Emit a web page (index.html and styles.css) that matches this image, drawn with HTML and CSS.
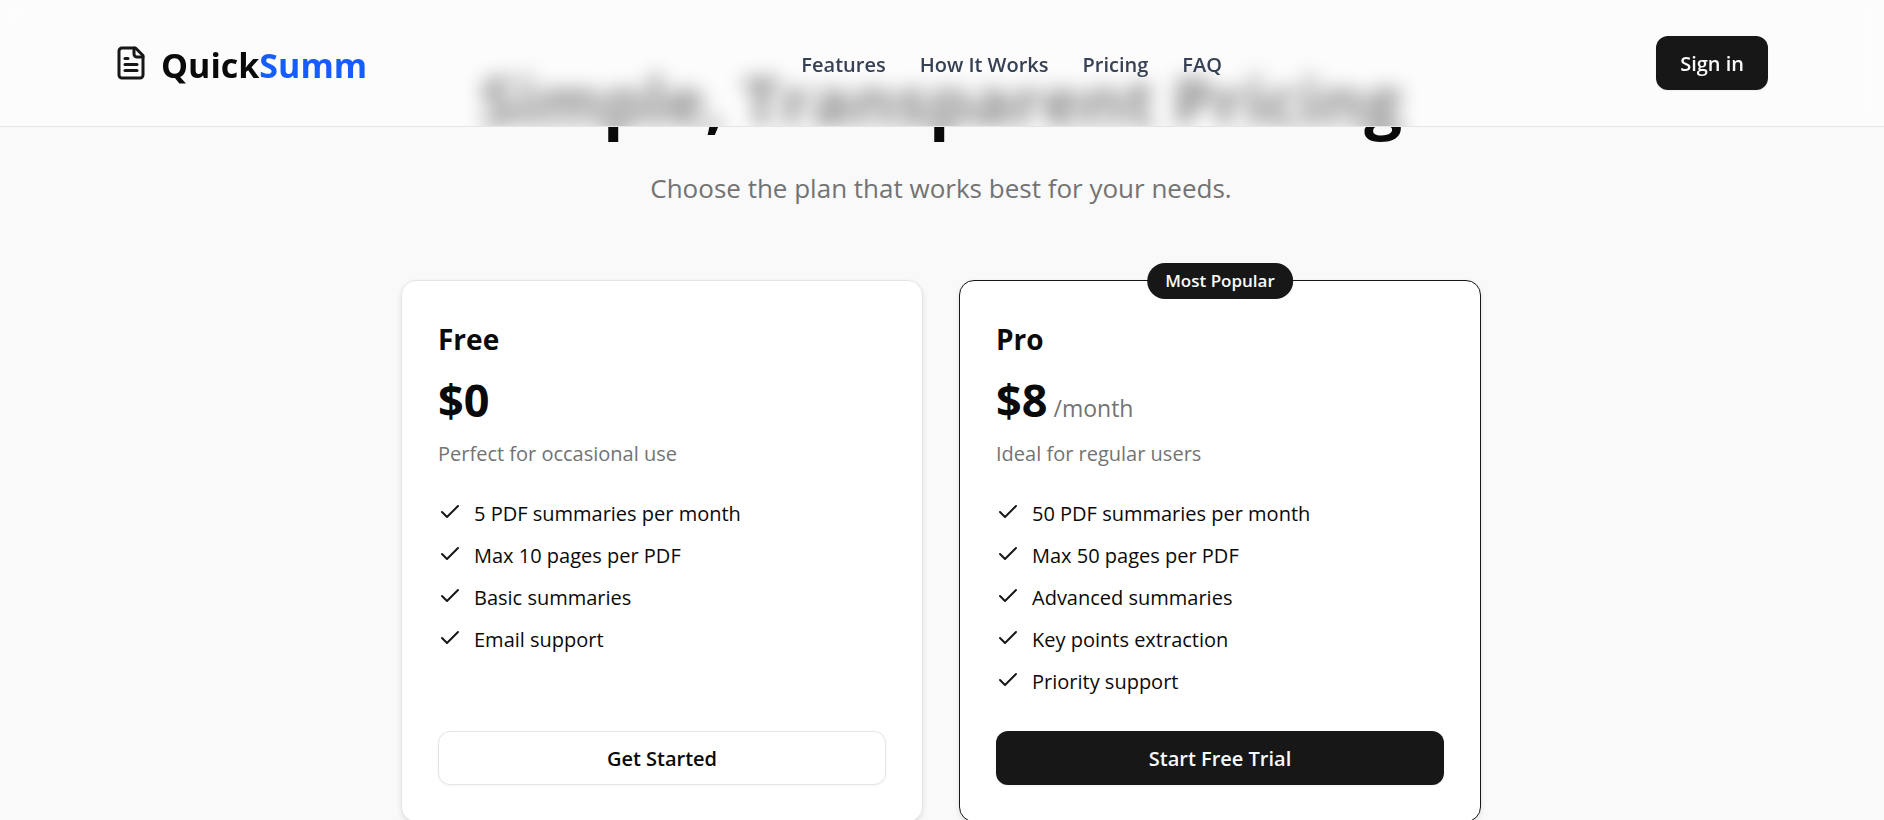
FILE: index.html
```html
<!DOCTYPE html>
<html lang="en">
<head>
<meta charset="utf-8">
<meta name="viewport" content="width=device-width, initial-scale=1">
<title>QuickSumm – Pricing</title>
<link rel="stylesheet" href="styles.css">
</head>
<body>
<svg class="sprite" aria-hidden="true">
  <symbol id="check" viewBox="0 0 24 24"><path d="M20 6 9 17l-5-5"/></symbol>
</svg>
<header class="site-header">
  <a class="brand" href="#">
    <svg class="brand-icon" viewBox="0 0 24 24" aria-hidden="true"><path d="M15 2H6a2 2 0 0 0-2 2v16a2 2 0 0 0 2 2h12a2 2 0 0 0 2-2V7Z"/><path d="M14 2v4a2 2 0 0 0 2 2h4"/><path d="M10 9H8"/><path d="M16 13H8"/><path d="M16 17H8"/></svg>
    <span class="brand-name">Quick<span class="brand-accent">Summ</span></span>
  </a>
  <nav class="nav">
    <a href="#features">Features</a>
    <a href="#how">How It Works</a>
    <a href="#pricing">Pricing</a>
    <a href="#faq">FAQ</a>
  </nav>
  <button class="button button-dark" type="button">Sign in</button>
</header>
<main class="pricing" id="pricing">
  <h1 class="title">Simple, Transparent Pricing</h1>
  <p class="subtitle">Choose the plan that works best for your needs.</p>
  <div class="plans">
    <section class="plan">
      <h2 class="plan-name">Free</h2>
      <p class="price">$0</p>
      <p class="plan-note">Perfect for occasional use</p>
      <ul class="perks">
        <li><svg class="check"><use href="#check"/></svg>5 PDF summaries per month</li>
        <li><svg class="check"><use href="#check"/></svg>Max 10 pages per PDF</li>
        <li><svg class="check"><use href="#check"/></svg>Basic summaries</li>
        <li><svg class="check"><use href="#check"/></svg>Email support</li>
      </ul>
      <button class="button button-light" type="button">Get Started</button>
    </section>
    <section class="plan plan-featured">
      <span class="badge">Most Popular</span>
      <h2 class="plan-name">Pro</h2>
      <p class="price">$8<span class="period">/month</span></p>
      <p class="plan-note">Ideal for regular users</p>
      <ul class="perks">
        <li><svg class="check"><use href="#check"/></svg>50 PDF summaries per month</li>
        <li><svg class="check"><use href="#check"/></svg>Max 50 pages per PDF</li>
        <li><svg class="check"><use href="#check"/></svg>Advanced summaries</li>
        <li><svg class="check"><use href="#check"/></svg>Key points extraction</li>
        <li><svg class="check"><use href="#check"/></svg>Priority support</li>
      </ul>
      <button class="button button-dark" type="button">Start Free Trial</button>
    </section>
  </div>
</main>
</body>
</html>
```
FILE: styles.css
```css
* {
  box-sizing: border-box;
  margin: 0;
  padding: 0;
}

body {
  background: #f9f9f9;
  color: #0a0a0a;
  font-family: "Segoe UI", "Open Sans", "Noto Sans", sans-serif;
  font-size: 20px;
  line-height: 30px;
}

a {
  color: inherit;
  text-decoration: none;
}

.sprite {
  display: none;
}

.site-header {
  position: fixed;
  inset: 0 0 auto;
  z-index: 10;
  display: flex;
  align-items: center;
  justify-content: space-between;
  padding: 36px 116px 36px 113px;
  border-bottom: 1px solid #e5e5e5;
}

/* The frosted layer runs past the header so its blur stays even at the lower edge. */
.site-header::before {
  content: "";
  position: absolute;
  inset: 0 0 -60px;
  z-index: -1;
  background: rgba(255, 255, 255, 0.5);
  backdrop-filter: blur(10px);
  mask: linear-gradient(#000, #000) top / 100% calc(100% - 60px) no-repeat;
}

.brand {
  display: flex;
  align-items: center;
  gap: 12px;
}

.brand-icon,
.check {
  flex: none;
  fill: none;
  stroke: #171717;
  stroke-width: 2;
  stroke-linecap: round;
  stroke-linejoin: round;
}

.brand-icon {
  width: 36px;
  height: 36px;
}

.brand-name {
  padding-top: 4px;
  font-size: 34px;
  font-weight: 700;
  line-height: 48px;
}

.brand-accent {
  color: #155dfc;
}

.nav {
  display: flex;
  gap: 34px;
  padding-top: 4px;
  color: #364153;
  font-weight: 600;
}

.button {
  height: 54px;
  padding: 2px 24px 0;
  border: 0;
  border-radius: 12px;
  font: inherit;
  font-weight: 600;
  box-shadow: 0 1px 3px rgba(0, 0, 0, 0.05);
}

.button-dark {
  background: #171717;
  color: #fafafa;
}

.button-light {
  border: 1px solid #e5e5e5;
  background: #fff;
  color: #0a0a0a;
}

.pricing {
  padding: 64px 38px 36px 36px;
}

.title {
  font-size: 67px;
  font-weight: 700;
  line-height: 72px;
  text-align: center;
}

.subtitle {
  margin-top: 32px;
  color: #737373;
  font-size: 26px;
  line-height: 40px;
  text-align: center;
}

.plans {
  display: grid;
  grid-template-columns: 1fr 1fr;
  gap: 36px;
  max-width: 1080px;
  margin: 72px auto 0;
}

.plan {
  position: relative;
  display: flex;
  flex-direction: column;
  padding: 36px;
  border: 1px solid #e5e5e5;
  border-radius: 15px;
  background: #fff;
  box-shadow: 0 2px 5px rgba(0, 0, 0, 0.1);
}

.plan-featured {
  border-color: #171717;
}

.badge {
  position: absolute;
  top: -18px;
  left: 50%;
  padding: 0 18px;
  border-radius: 18px;
  background: #171717;
  color: #fafafa;
  font-size: 17px;
  font-weight: 600;
  line-height: 36px;
  white-space: nowrap;
  transform: translateX(-50%);
}

.plan-name {
  font-size: 28px;
  line-height: 44px;
}

.price {
  display: flex;
  align-items: baseline;
  gap: 6px;
  margin-top: 12px;
  font-size: 45px;
  font-weight: 700;
  line-height: 54px;
}

.period {
  color: #737373;
  font-size: 23px;
  font-weight: 400;
  line-height: 30px;
}

.plan-note {
  margin-top: 12px;
  color: #737373;
}

.perks {
  display: grid;
  gap: 12px;
  margin: 30px 0 34px;
  list-style: none;
}

.perks li {
  display: flex;
  gap: 12px;
}

.check {
  width: 24px;
  height: 26px;
}

.plan .button {
  margin-top: auto;
}
```
